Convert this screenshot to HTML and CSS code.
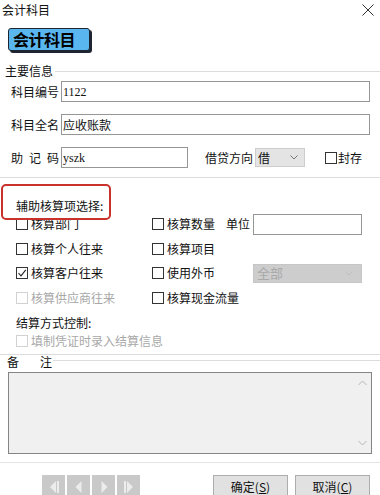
FILE: index.html
```html
<!DOCTYPE html>
<html lang="zh">
<head>
<meta charset="utf-8">
<title>会计科目</title>
<link rel="stylesheet" href="styles.css">
</head>
<body>
<div class="titlebar">
  <span class="title">会计科目</span>
  <svg class="close" width="12" height="12" viewBox="0 0 12 12"><path d="M0.5 0.5L11.5 11.5M11.5 0.5L0.5 11.5" stroke="#333" stroke-width="1" fill="none"/></svg>
</div>
<div class="badge-wrap"><div class="badge">会计科目</div></div>

<div class="group-head main-head"><span>主要信息</span><i class="rule"></i></div>
<div class="form-row first">
  <div class="lbl"><span>科目编号</span></div>
  <div class="field wide latin">1122</div>
</div>
<div class="form-row">
  <div class="lbl"><span>科目全名</span></div>
  <div class="field wide">应收账款</div>
</div>
<div class="form-row">
  <div class="lbl"><span>助记码</span></div>
  <div class="field short latin">yszk</div>
  <span class="dir-label">借贷方向</span>
  <div class="sel"><span>借</span><svg width="8" height="5" viewBox="0 0 8 5"><path d="M0.5 0.5L4 4L7.5 0.5" stroke="#777" fill="none"/></svg></div>
  <span class="cb seal-cb"></span><span class="seal-txt">封存</span>
</div>
<div class="sep"></div>

<div class="aux-head">辅助核算项选择:</div>
<div class="aux-grid">
  <div class="cell"><span class="cb"></span>核算部门</div>
  <div class="cell"><span class="cb"></span>核算数量<div class="unit"><span>单位</span><div class="field unit-field"></div></div></div>
  <div class="cell"><span class="cb"></span>核算个人往来</div>
  <div class="cell"><span class="cb"></span>核算项目</div>
  <div class="cell"><span class="cb checked"><svg width="10" height="10" viewBox="0 0 10 10"><path d="M1.5 5L4 7.8L8.8 1.8" stroke="#222" stroke-width="1.1" fill="none"/></svg></span>核算客户往来</div>
  <div class="cell"><span class="cb"></span>使用外币<div class="dsel"><span>全部</span><svg width="8" height="5" viewBox="0 0 8 5"><path d="M0.5 0.5L4 4L7.5 0.5" stroke="#bdbdbd" fill="none"/></svg></div></div>
  <div class="cell disabled"><span class="cb"></span>核算供应商往来</div>
  <div class="cell"><span class="cb"></span>核算现金流量</div>
</div>
<div class="settle-label">结算方式控制:</div>
<div class="cell settle-row disabled"><span class="cb"></span>填制凭证时录入结算信息</div>
<div class="sep sep2"></div>

<div class="group-head note-head"><span class="note-lbl">备注</span><i class="rule"></i></div>
<div class="memo">
  <div class="scroll">
    <svg width="9" height="6" viewBox="0 0 9 6"><path d="M0.5 5L4.5 1L8.5 5" stroke="#b5b5b5" fill="none"/></svg>
    <svg width="9" height="6" viewBox="0 0 9 6"><path d="M0.5 1L4.5 5L8.5 1" stroke="#b5b5b5" fill="none"/></svg>
  </div>
</div>
<div class="sep sep3"></div>

<div class="footer">
  <div class="nav">
    <span class="navbtn"><svg width="14" height="16" viewBox="0 0 14 16"><path d="M9 2L3 8L9 14Z" fill="#ececec"/><rect x="10" y="2" width="2" height="12" fill="#ececec"/></svg></span>
    <span class="navbtn"><svg width="14" height="16" viewBox="0 0 14 16"><path d="M9.5 2L3.5 8L9.5 14Z" fill="#ececec"/></svg></span>
    <span class="navbtn"><svg width="14" height="16" viewBox="0 0 14 16"><path d="M4.5 2L10.5 8L4.5 14Z" fill="#ececec"/></svg></span>
    <span class="navbtn"><svg width="14" height="16" viewBox="0 0 14 16"><rect x="2" y="2" width="2" height="12" fill="#ececec"/><path d="M5 2L11 8L5 14Z" fill="#ececec"/></svg></span>
  </div>
  <div class="actions">
    <button class="btn">确定(<u>S</u>)</button>
    <button class="btn">取消(<u>C</u>)</button>
  </div>
</div>
</body>
</html>
```

FILE: styles.css
```css
* { box-sizing: border-box; }
html, body { margin: 0; padding: 0; }
body {
  width: 380px;
  height: 495px;
  overflow: hidden;
  background: #fff;
  font-family: "Noto Sans CJK SC", "Microsoft YaHei", sans-serif;
  font-size: 12px;
  line-height: 14px;
  color: #111;
}

.titlebar {
  height: 20px;
  display: flex;
  align-items: center;
  justify-content: space-between;
  padding: 0 6px 0 2px;
}
.close { display: block; }

.badge-wrap {
  height: 33px;
  padding: 8px 0 0 8px;
}
.badge {
  width: 82px;
  height: 23px;
  border: 1px solid #1c2530;
  border-radius: 3px;
  background: #5ab6ee;
  box-shadow: 2px 2px 0 #1c2530;
  font-size: 16px;
  font-weight: bold;
  line-height: 21px;
  padding-left: 4px;
  letter-spacing: -0.5px;
  color: #000;
  white-space: nowrap;
}

.group-head {
  display: flex;
  align-items: center;
  height: 14px;
}
.main-head { margin-top: 11px; padding-left: 5px; }
.rule {
  flex: 1;
  height: 1px;
  background: #dcdcdc;
  margin-left: 2px;
}

.form-row {
  display: flex;
  align-items: center;
  height: 21px;
  margin-top: 12px;
}
.form-row.first { margin-top: 3px; }
.lbl {
  width: 61px;
  padding-left: 11px;
  flex: none;
  white-space: nowrap;
}
.lbl span {
  display: block;
  width: 48px;
  text-align: justify;
  text-align-last: justify;
  white-space: nowrap;
}
.field {
  height: 21px;
  border: 1px solid #969696;
  background: #fff;
  padding: 0 1px;
  display: flex;
  align-items: center;
  flex: none;
}
.wide { width: 309px; }
.short { width: 127px; }
.latin { font-family: "Liberation Serif", serif; font-size: 12px; }

.dir-label { margin-left: 17px; white-space: nowrap; }
.sel {
  margin-left: 2px;
  width: 50px;
  height: 19px;
  background: #e4e4e4;
  border: 1px solid #cdcdcd;
  display: flex;
  align-items: center;
  justify-content: space-between;
  padding: 0 6px 0 2px;
}
.cb {
  width: 12px;
  height: 12px;
  border: 1px solid #333;
  background: #fff;
  flex: none;
  margin-right: 3px;
  display: flex;
  align-items: center;
  justify-content: center;
}
.seal-cb { margin-left: 20px; margin-right: 1px; }

.sep { height: 1px; background: #dcdcdc; margin-top: 9px; }

.aux-head {
  position: relative;
  margin-top: 21px;
  height: 13px;
  line-height: 13px;
  padding-left: 16px;
}
.aux-head::before {
  content: "";
  position: absolute;
  left: 1px;
  top: -15px;
  width: 106px;
  height: 32px;
  border: 2px solid #c8322b;
  border-radius: 5px;
}

.aux-grid {
  display: grid;
  grid-template-columns: 136px 210px;
  grid-auto-rows: 24.5px;
  padding-left: 16px;
}
.cell {
  display: flex;
  align-items: center;
  white-space: nowrap;
}
.unit {
  margin-left: auto;
  display: flex;
  align-items: center;
}
.unit-field { width: 109px; margin-left: 3px; }
.dsel {
  margin-left: auto;
  width: 109px;
  height: 19px;
  background: #cdcdcd;
  border: 1px solid #c6c6c6;
  color: #a9a9a9;
  display: flex;
  align-items: center;
  justify-content: space-between;
  padding: 0 8px 0 3px;
  font-size: 13px;
}
.disabled { color: #a8a8a8; }
.disabled .cb { border-color: #d2d2d2; }

.settle-label { margin-top: 6px; padding-left: 16px; height: 14px; }
.settle-row { margin-top: 4px; padding-left: 16px; height: 14px; }
.sep2 { margin-top: 6px; }

.note-head { align-items: flex-start; padding-left: 7px; }
.note-lbl {
  display: block;
  width: 45px;
  text-align: justify;
  text-align-last: justify;
}
.note-head .rule { margin-top: 5px; margin-left: 1px; }

.memo {
  margin: 3px 8px 0 8px;
  height: 82px;
  border: 1px solid #858585;
  background: #f0f0f0;
  display: flex;
  justify-content: flex-end;
}
.scroll {
  width: 17px;
  display: flex;
  flex-direction: column;
  justify-content: space-between;
  align-items: center;
  padding: 7px 0;
}
.scroll svg { display: block; }
.sep3 { margin-top: 8px; background: #e4e4e4; }

.footer {
  margin-top: 12px;
  display: flex;
  padding: 0 10px 0 42px;
}
.nav { display: flex; gap: 2px; }
.navbtn {
  width: 23px;
  height: 23px;
  background: #c9c9c9;
  display: flex;
  align-items: center;
  justify-content: center;
}
.navbtn svg { display: block; }
.actions { margin-left: auto; display: flex; gap: 7px; }
.btn {
  width: 75px;
  height: 23px;
  border: 1px solid #adadad;
  background: #e1e1e1;
  font-family: "Noto Sans CJK SC", sans-serif;
  font-size: 12px;
  color: #111;
  padding: 0;
  line-height: 21px;
}
.btn u { text-decoration: underline; }
```
